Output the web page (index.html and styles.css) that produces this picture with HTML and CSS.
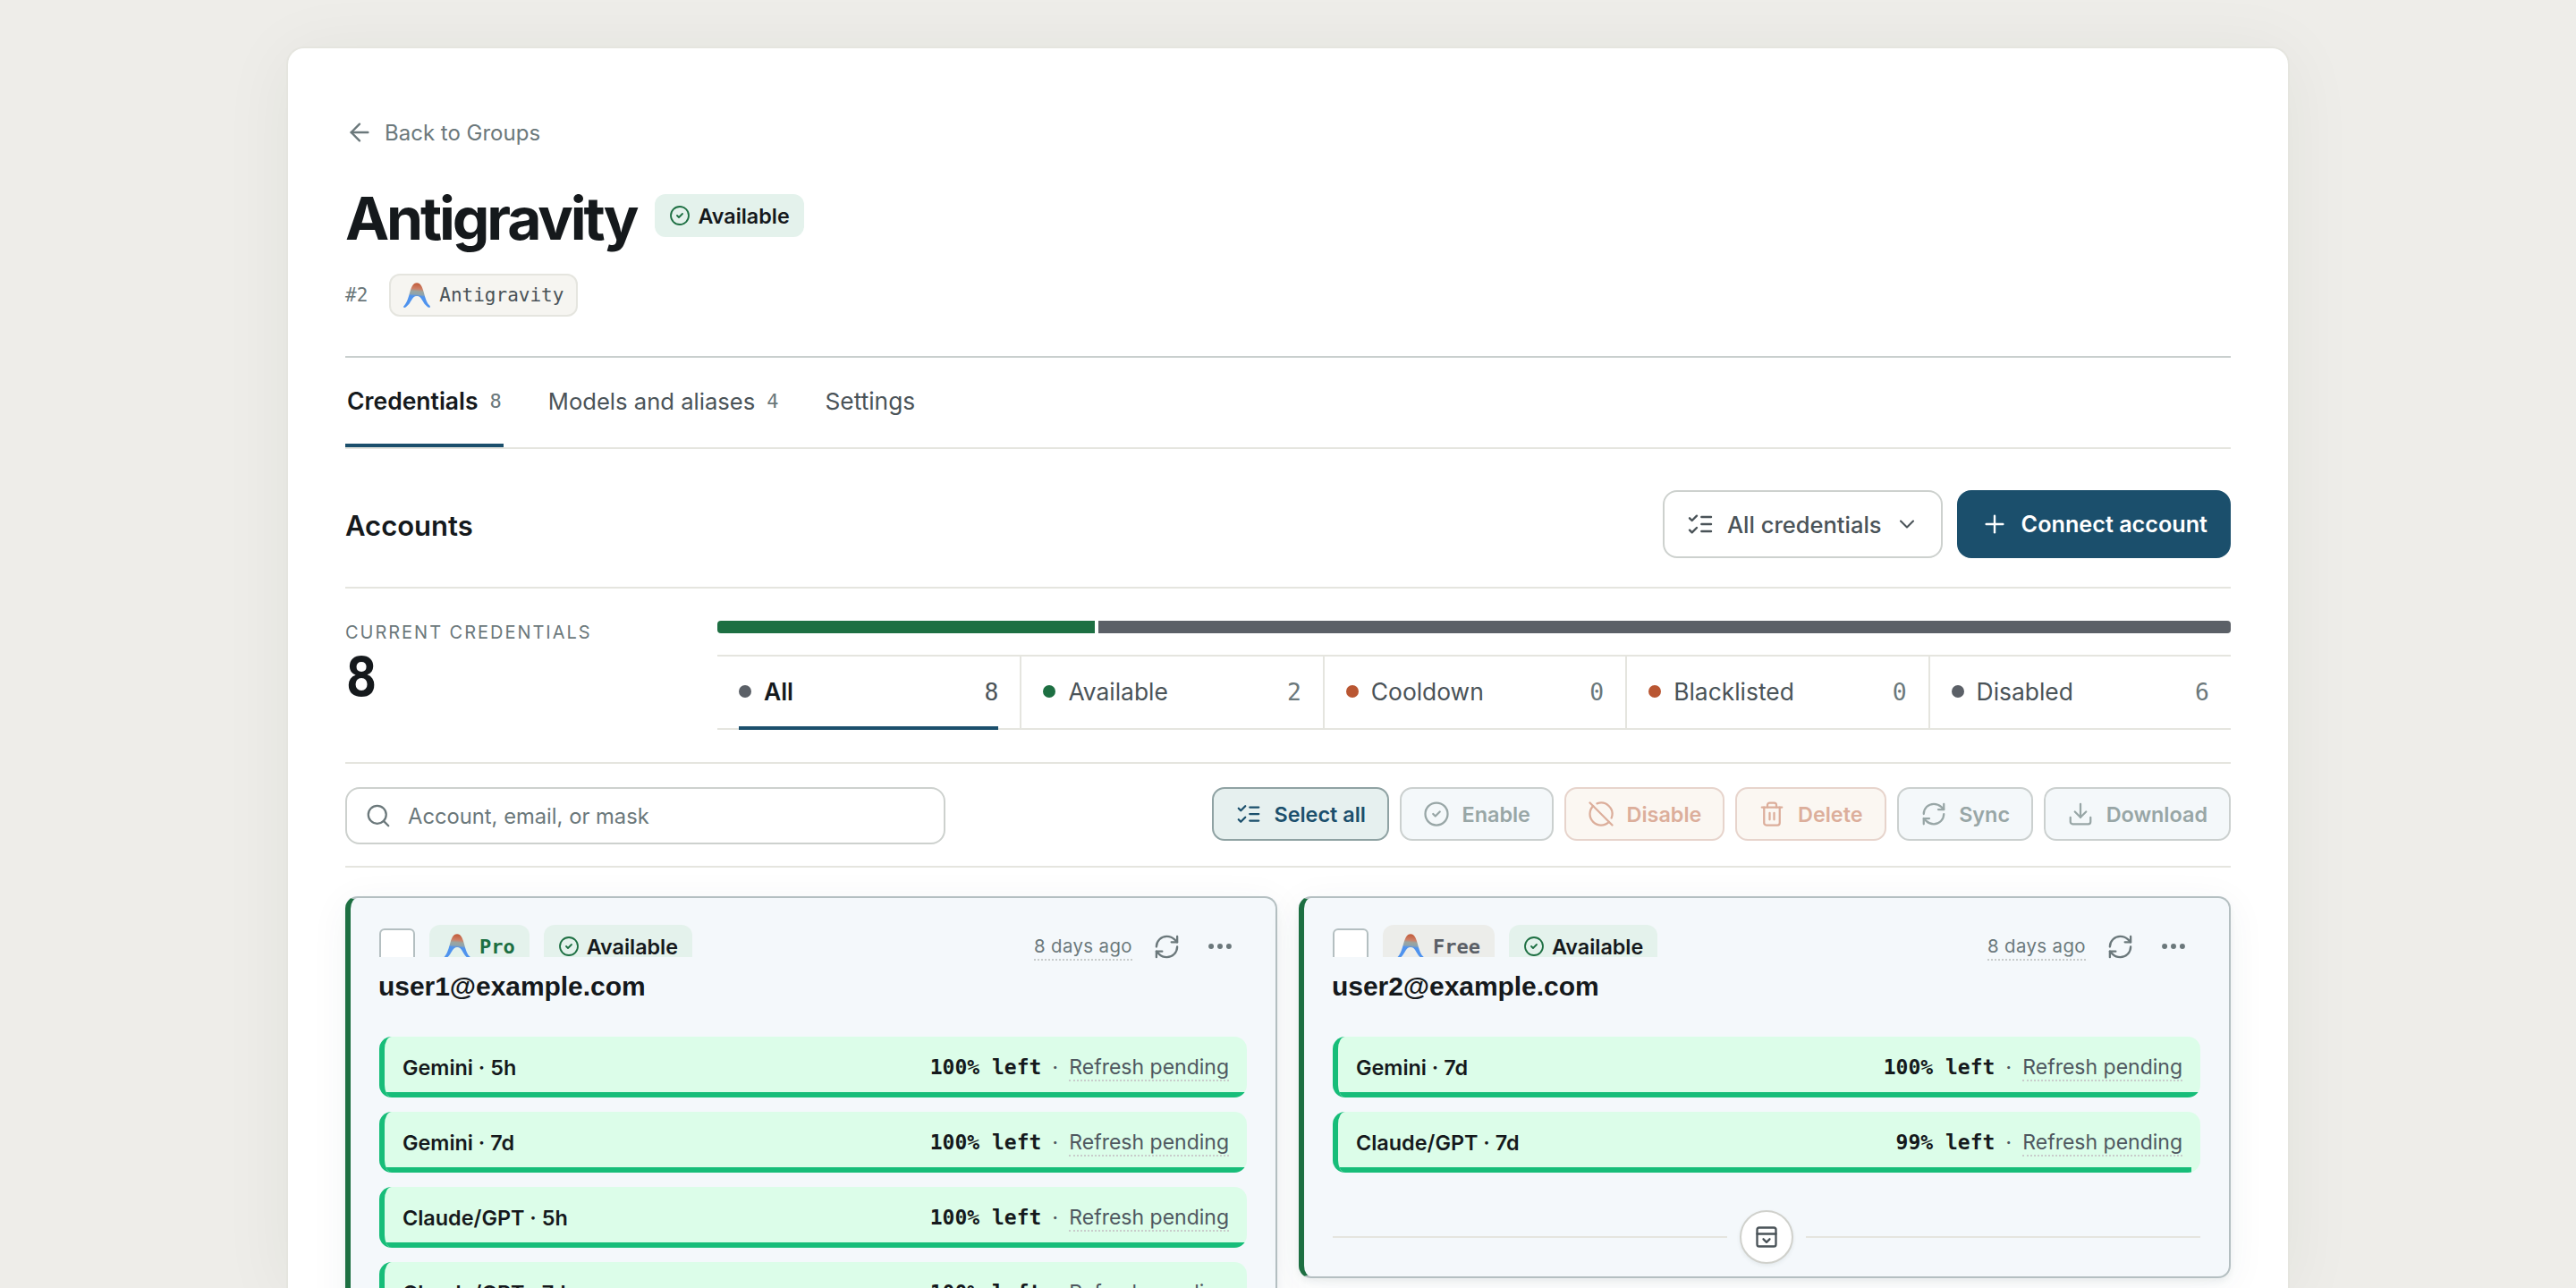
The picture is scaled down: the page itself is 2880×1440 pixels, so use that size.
FILE: index.html
```html
<!DOCTYPE html>
<html lang="en">

<head>
    <meta charset="UTF-8">
    <meta name="viewport" content="width=device-width, initial-scale=1.0">
    <title>Antigravity</title>
    <link rel="stylesheet" href="styles.css">
</head>

<body>
    <!-- Shared icons -->
    <svg class="sprite" width="0" height="0">
        <defs>
            <linearGradient id="arch" x1="0.1" y1="0" x2="0" y2="1">
                <stop offset="0" stop-color="#c4603f" />
                <stop offset="0.2" stop-color="#cd8068" />
                <stop offset="0.3" stop-color="#9aa5a0" />
                <stop offset="0.42" stop-color="#8fa3ac" />
                <stop offset="0.5" stop-color="#4f93ee" />
                <stop offset="1" stop-color="#4f93ee" />
            </linearGradient>
            <symbol id="logo" viewBox="0 0 24 24">
                <path fill="url(#arch)" stroke="none" d="M21.751 22.607c1.34 1.005 3.35.335 1.508-1.508C17.73 15.74 18.904 1 12.037 1 5.17 1 6.342 15.74.815 21.1c-2.01 2.009.167 2.511 1.507 1.506 5.192-3.517 4.857-9.714 9.715-9.714 4.857 0 4.522 6.197 9.714 9.715z" />
            </symbol>
            <symbol id="arrow-left" viewBox="0 0 24 24"><path d="m12 19-7-7 7-7" /><path d="M19 12H5" /></symbol>
            <symbol id="check-circle" viewBox="0 0 24 24"><circle cx="12" cy="12" r="10" /><path d="m9 12 2 2 4-4" /></symbol>
            <symbol id="list-checks" viewBox="0 0 24 24"><path d="m3 17 2 2 4-4" /><path d="m3 7 2 2 4-4" /><path d="M13 6h8" /><path d="M13 12h8" /><path d="M13 18h8" /></symbol>
            <symbol id="chevron-down" viewBox="0 0 24 24"><path d="m6 9 6 6 6-6" /></symbol>
            <symbol id="plus" viewBox="0 0 24 24"><path d="M5 12h14" /><path d="M12 5v14" /></symbol>
            <symbol id="search" viewBox="0 0 24 24"><circle cx="11" cy="11" r="8" /><path d="m21 21-4.3-4.3" /></symbol>
            <symbol id="circle-off" viewBox="0 0 24 24"><path d="m2 2 20 20" /><path d="M8.35 2.69A10 10 0 0 1 21.3 15.65" /><path d="M19.08 19.08A10 10 0 1 1 4.92 4.92" /></symbol>
            <symbol id="trash" viewBox="0 0 24 24"><path d="M3 6h18" /><path d="M19 6v14a2 2 0 0 1-2 2H7a2 2 0 0 1-2-2V6" /><path d="M8 6V4a2 2 0 0 1 2-2h4a2 2 0 0 1 2 2v2" /><path d="M10 11v6" /><path d="M14 11v6" /></symbol>
            <symbol id="refresh" viewBox="0 0 24 24"><path d="M3 12a9 9 0 0 1 9-9 9.75 9.75 0 0 1 6.74 2.74L21 8" /><path d="M21 3v5h-5" /><path d="M21 12a9 9 0 0 1-9 9 9.75 9.75 0 0 1-6.74-2.74L3 16" /><path d="M8 16H3v5" /></symbol>
            <symbol id="download" viewBox="0 0 24 24"><path d="M21 15v4a2 2 0 0 1-2 2H5a2 2 0 0 1-2-2v-4" /><path d="m7 10 5 5 5-5" /><path d="M12 15V3" /></symbol>
            <symbol id="more" viewBox="0 0 24 24"><g fill="currentColor"><circle cx="5" cy="12" r="1.2" /><circle cx="12" cy="12" r="1.2" /><circle cx="19" cy="12" r="1.2" /></g></symbol>
            <symbol id="panel-open" viewBox="0 0 24 24"><rect x="3" y="3" width="18" height="18" rx="2" /><path d="M3 9h18" /><path d="m9 14 3 3 3-3" /></symbol>
        </defs>
    </svg>

    <main class="panel">
        <a class="back"><svg class="icon"><use href="#arrow-left" /></svg>Back to Groups</a>

        <div class="title-row">
            <h1>Antigravity</h1>
            <span class="badge badge-ok"><svg class="icon"><use href="#check-circle" /></svg>Available</span>
        </div>
        <div class="meta-row">
            <span class="hash">#2</span>
            <span class="provider"><svg class="logo"><use href="#logo" /></svg>Antigravity</span>
        </div>

        <nav class="tabs">
            <a class="tab active">Credentials<span class="tab-count">8</span></a>
            <a class="tab">Models and aliases<span class="tab-count">4</span></a>
            <a class="tab tab-plain">Settings</a>
        </nav>

        <section class="accounts-head">
            <h2>Accounts</h2>
            <button class="btn-lg"><svg class="icon"><use href="#list-checks" /></svg>All credentials<svg class="icon chevron"><use href="#chevron-down" /></svg></button>
            <button class="btn-lg btn-primary"><svg class="icon"><use href="#plus" /></svg>Connect account</button>
        </section>

        <section class="summary">
            <div class="total">
                <div class="total-label">CURRENT CREDENTIALS</div>
                <div class="total-value">8</div>
            </div>
            <div class="breakdown">
                <div class="bar">
                    <span class="bar-ok"></span>
                    <span class="bar-off"></span>
                </div>
                <div class="filters">
                    <div class="filter active"><i class="dot"></i>All<span class="num">8</span></div>
                    <div class="filter"><i class="dot green"></i>Available<span class="num">2</span></div>
                    <div class="filter"><i class="dot red"></i>Cooldown<span class="num">0</span></div>
                    <div class="filter"><i class="dot red"></i>Blacklisted<span class="num">0</span></div>
                    <div class="filter"><i class="dot"></i>Disabled<span class="num">6</span></div>
                </div>
            </div>
        </section>

        <section class="toolbar">
            <div class="search"><svg class="icon"><use href="#search" /></svg>Account, email, or mask</div>
            <div class="actions">
                <button class="btn btn-select"><svg class="icon"><use href="#list-checks" /></svg>Select all</button>
                <button class="btn"><svg class="icon"><use href="#check-circle" /></svg>Enable</button>
                <button class="btn btn-danger"><svg class="icon"><use href="#circle-off" /></svg>Disable</button>
                <button class="btn btn-danger"><svg class="icon"><use href="#trash" /></svg>Delete</button>
                <button class="btn"><svg class="icon"><use href="#refresh" /></svg>Sync</button>
                <button class="btn"><svg class="icon"><use href="#download" /></svg>Download</button>
            </div>
        </section>

        <section class="cards">
            <article class="card">
                <header class="card-head">
                    <div class="card-badges">
                        <span class="checkbox"></span>
                        <span class="badge badge-ok plan plan-pro"><svg class="logo"><use href="#logo" /></svg>Pro</span>
                        <span class="badge badge-ok"><svg class="icon"><use href="#check-circle" /></svg>Available</span>
                    </div>
                    <div class="card-tools">
                        <span class="ago">8 days ago</span>
                        <span class="tool"><svg class="icon"><use href="#refresh" /></svg></span>
                        <span class="tool tool-more"><svg class="icon"><use href="#more" /></svg></span>
                    </div>
                </header>
                <h3>user1@example.com</h3>
                <div class="quotas">
                    <div class="quota"><span class="quota-name">Gemini · 5h</span><b>100% left</b><span>·</span><span class="pending">Refresh pending</span><i class="fill" style="width: 100%"></i></div>
                    <div class="quota"><span class="quota-name">Gemini · 7d</span><b>100% left</b><span>·</span><span class="pending">Refresh pending</span><i class="fill" style="width: 100%"></i></div>
                    <div class="quota"><span class="quota-name">Claude/GPT · 5h</span><b>100% left</b><span>·</span><span class="pending">Refresh pending</span><i class="fill" style="width: 100%"></i></div>
                    <div class="quota"><span class="quota-name">Claude/GPT · 7d</span><b>100% left</b><span>·</span><span class="pending">Refresh pending</span><i class="fill" style="width: 100%"></i></div>
                </div>
                <div class="expand"><span class="expand-btn"><svg class="icon"><use href="#panel-open" /></svg></span></div>
            </article>

            <article class="card">
                <header class="card-head">
                    <div class="card-badges">
                        <span class="checkbox"></span>
                        <span class="badge plan plan-free"><svg class="logo"><use href="#logo" /></svg>Free</span>
                        <span class="badge badge-ok"><svg class="icon"><use href="#check-circle" /></svg>Available</span>
                    </div>
                    <div class="card-tools">
                        <span class="ago">8 days ago</span>
                        <span class="tool"><svg class="icon"><use href="#refresh" /></svg></span>
                        <span class="tool tool-more"><svg class="icon"><use href="#more" /></svg></span>
                    </div>
                </header>
                <h3>user2@example.com</h3>
                <div class="quotas">
                    <div class="quota"><span class="quota-name">Gemini · 7d</span><b>100% left</b><span>·</span><span class="pending">Refresh pending</span><i class="fill" style="width: 100%"></i></div>
                    <div class="quota"><span class="quota-name">Claude/GPT · 7d</span><b>99% left</b><span>·</span><span class="pending">Refresh pending</span><i class="fill" style="width: 99%"></i></div>
                </div>
                <div class="expand"><span class="expand-btn"><svg class="icon"><use href="#panel-open" /></svg></span></div>
            </article>
        </section>
    </main>
</body>

</html>
```
FILE: styles.css
```css
:root {
    --ink: #15191c;
    --text: #4a5358;
    --muted: #6b787b;
    --line: #e5e5df;
    --line-strong: #cdd1ce;
    --blue: #1b4f6c;
    --green: #1d6f42;
    --slate: #5b6067;
    --rust: #b95632;
    --mono: "DejaVu Sans Mono", monospace;
}

* {
    box-sizing: border-box;
}

body {
    margin: 0;
    height: 100vh;
    overflow: hidden;
    background: #eeede9;
    color: var(--ink);
    font-family: Inter, "Liberation Sans", sans-serif;
    font-size: 24px;
}

h1,
h2,
h3 {
    margin: 0;
}

button {
    font-family: inherit;
    margin: 0;
}

.sprite {
    position: absolute;
}

.icon {
    width: 32px;
    height: 32px;
    flex: none;
    fill: none;
    stroke: currentColor;
    stroke-width: 1.8;
    stroke-linecap: round;
    stroke-linejoin: round;
}

.logo {
    width: 30px;
    height: 30px;
    flex: none;
}

.panel {
    width: 2240px;
    height: calc(100vh - 52px);
    margin: 52px auto 0;
    padding: 76px 64px 0;
    background: #fff;
    border: 2px solid var(--line);
    border-bottom: 0;
    border-radius: 20px 20px 0 0;
    box-shadow: 0 8px 80px rgba(40, 45, 40, 0.06);
}

/* Header */
.back {
    display: flex;
    align-items: center;
    gap: 12px;
    height: 36px;
    color: var(--muted);
}

.title-row {
    display: flex;
    align-items: flex-start;
    gap: 21px;
    height: 72px;
    margin-top: 42px;
}

h1 {
    font-size: 66px;
    line-height: 72px;
    font-weight: 680;
    letter-spacing: -3.15px;
}

.badge {
    display: flex;
    align-items: center;
    gap: 8px;
    flex: none;
    height: 48px;
    padding: 0 16px;
    border-radius: 12px;
    font-size: 23.3px;
    font-weight: 600;
}

.badge .icon {
    width: 24px;
    height: 24px;
    color: var(--green);
}

.badge-ok {
    background: #e4f2ec;
}

.title-row .badge {
    margin-top: 9px;
}

.meta-row {
    display: flex;
    align-items: center;
    gap: 24px;
    height: 48px;
    margin-top: 26px;
    font-family: var(--mono);
    font-size: 21px;
    color: var(--muted);
}

.provider {
    display: flex;
    align-items: center;
    gap: 10px;
    height: 48px;
    padding: 0 14px;
    background: #f6f5f1;
    border: 2px solid var(--line);
    border-radius: 12px;
    color: var(--text);
}

/* Tabs */
.tabs {
    display: flex;
    gap: 48px;
    margin-top: 44px;
    border-top: 2px solid #c9cfce;
    border-bottom: 2px solid var(--line);
}

.tab {
    display: flex;
    align-items: center;
    gap: 13px;
    height: 100px;
    padding: 0 2px;
    border-bottom: 4px solid transparent;
    font-size: 25.6px;
    color: var(--text);
}

.tab.active {
    border-color: var(--blue);
    color: var(--ink);
    font-size: 26.5px;
    font-weight: 600;
}

.tab-plain {
    font-size: 26.3px;
}

.tab-count {
    font-family: var(--mono);
    font-size: 22px;
    font-weight: 400;
    color: var(--muted);
}

/* Accounts */
.accounts-head {
    display: flex;
    align-items: center;
    gap: 16px;
    padding: 46px 0 32px;
    border-bottom: 2px solid var(--line);
}

h2 {
    flex: 1;
    padding-top: 2px;
    font-size: 31px;
    font-weight: 600;
}

.btn-lg {
    display: flex;
    align-items: center;
    gap: 14px;
    height: 76px;
    padding: 0 24px;
    background: #fff;
    border: 2px solid var(--line-strong);
    border-radius: 16px;
    color: var(--text);
    font-size: 25.5px;
    font-weight: 500;
}

.btn-lg .chevron {
    width: 28px;
    height: 28px;
}

.btn-primary {
    background: var(--blue);
    border-color: var(--blue);
    color: #fff;
    font-size: 25.2px;
    font-weight: 600;
}

/* Summary */
.summary {
    display: grid;
    grid-template-columns: 416px 1fr;
    padding: 36px 0;
    border-bottom: 2px solid var(--line);
}

.total-label {
    font-size: 20px;
    line-height: 26px;
    letter-spacing: 1.97px;
    color: var(--muted);
}

.total-value {
    margin-top: 7px;
    font-family: var(--mono);
    font-size: 60px;
    line-height: 60px;
    font-weight: 700;
}

.bar {
    display: flex;
    gap: 4px;
    height: 14px;
    border-radius: 4px;
    overflow: hidden;
}

.bar-ok {
    flex: 2;
    background: var(--green);
}

.bar-off {
    flex: 6;
    background: var(--slate);
}

.filters {
    display: grid;
    grid-template-columns: repeat(5, 1fr);
    margin-top: 24px;
    border-top: 2px solid var(--line);
    border-bottom: 2px solid var(--line);
}

.filter {
    position: relative;
    display: flex;
    align-items: center;
    gap: 14px;
    height: 78px;
    margin-bottom: 2px;
    padding: 0 24px;
    font-size: 26.4px;
    color: var(--text);
}

.filter + .filter {
    height: 80px;
    margin-bottom: 0;
    padding-bottom: 2px;
    border-left: 2px solid var(--line);
}

.filter.active {
    color: var(--ink);
    font-weight: 600;
}

.filter.active::after {
    content: "";
    position: absolute;
    left: 24px;
    right: 24px;
    bottom: -4px;
    height: 4px;
    background: var(--blue);
}

.dot {
    width: 14px;
    height: 14px;
    border-radius: 50%;
    background: var(--slate);
}

.dot.green {
    background: var(--green);
}

.dot.red {
    background: var(--rust);
}

.num {
    margin-left: auto;
    font-family: var(--mono);
    font-weight: 400;
    color: var(--muted);
}

.active .num {
    color: var(--text);
}

/* Toolbar */
.toolbar {
    display: flex;
    align-items: flex-start;
    justify-content: space-between;
    padding: 26px 0 24px;
    border-bottom: 2px solid var(--line);
}

.search {
    display: flex;
    align-items: center;
    gap: 18px;
    width: 671px;
    height: 64px;
    padding: 0 20px;
    border: 2px solid var(--line-strong);
    border-radius: 16px;
    font-size: 23.75px;
    color: var(--muted);
}

.search .icon,
.btn .icon {
    width: 30px;
    height: 30px;
}

.actions {
    display: flex;
    gap: 12px;
}

.btn {
    display: flex;
    align-items: center;
    gap: 13.6px;
    height: 60px;
    padding: 0 24px;
    background: #f4f8fa;
    border: 2px solid #cbd0cf;
    border-radius: 14px;
    color: #98a6a6;
    font-size: 23.4px;
    font-weight: 600;
}

.btn-select {
    background: #e6f0ef;
    border-color: #8fa2a3;
    color: var(--blue);
}

.btn-danger {
    background: #fbf7f2;
    border-color: #e7d4cc;
    color: #dcae9b;
}

/* Cards */
.cards {
    display: grid;
    grid-template-columns: 1fr 1fr;
    align-items: start;
    gap: 24px;
    padding-top: 32px;
}

.card {
    padding: 30px 32px 14px;
    background: #f4f8fb;
    border: 2px solid #b4bfc1;
    border-left: 6px solid var(--green);
    border-radius: 14px;
    box-shadow: 0 4px 6px rgba(40, 70, 70, 0.06), 0 8px 44px rgba(40, 70, 80, 0.06);
}

.card-head {
    display: flex;
    justify-content: space-between;
    align-items: flex-start;
    height: 36px;
}

.card-badges {
    display: flex;
    align-items: flex-start;
    gap: 16px;
    height: 36px;
    overflow: hidden;
}

.checkbox {
    flex: none;
    width: 40px;
    height: 40px;
    margin-top: 4px;
    background: #fff;
    border: 2px solid #b4bfc1;
    border-radius: 6px;
}

.plan {
    gap: 10px;
    font-family: var(--mono);
    font-size: 22px;
    font-weight: 700;
}

.plan-pro {
    color: var(--green);
}

.plan-free {
    background: #ecedea;
    color: var(--slate);
}

.card-tools {
    display: flex;
    align-items: center;
    height: 48px;
    color: var(--muted);
}

.ago {
    margin: 2px 8px 0 0;
    border-bottom: 2px dotted #c8cccb;
    font-size: 20.4px;
    line-height: 28px;
    letter-spacing: 0.4px;
}

.tool {
    display: flex;
    align-items: center;
    justify-content: center;
    width: 60px;
    height: 48px;
}

.tool .icon {
    width: 31px;
    height: 31px;
}

.tool-more .icon {
    width: 34px;
    height: 34px;
}

h3 {
    margin: 15px 0 0 -1px;
    font-family: "Liberation Sans", Arial, sans-serif;
    font-size: 30px;
    line-height: 36px;
    letter-spacing: -0.05px;
}

.quotas {
    display: grid;
    gap: 16px;
    margin-top: 38px;
}

.quota {
    position: relative;
    display: flex;
    align-items: center;
    gap: 12px;
    height: 68px;
    padding: 0 20px;
    background: #dcfde9;
    border-left: 6px solid #17bd79;
    border-radius: 14px;
    overflow: hidden;
    color: #4f5860;
}

.quota-name {
    flex: 1;
    font-size: 23.4px;
    font-weight: 600;
    color: var(--ink);
}

.quota b {
    font-family: var(--mono);
    font-size: 23px;
    color: var(--ink);
}

.pending {
    margin-top: 2px;
    border-bottom: 2px dotted #c8cccb;
    font-size: 23px;
    line-height: 28px;
}

.fill {
    position: absolute;
    left: 0;
    bottom: 0;
    height: 6px;
    background: #17bd79;
}

.expand {
    display: flex;
    align-items: center;
    gap: 14px;
    margin-top: 42px;
}

.expand::before,
.expand::after {
    content: "";
    flex: 1;
    height: 2px;
    background: var(--line);
}

.expand-btn {
    display: flex;
    align-items: center;
    justify-content: center;
    width: 60px;
    height: 60px;
    background: #fff;
    border: 2px solid #d0d1cc;
    border-radius: 50%;
    box-shadow: 0 2px 4px rgba(40, 60, 60, 0.08);
    color: var(--text);
}

.expand-btn .icon {
    width: 28px;
    height: 28px;
    stroke-width: 2;
}
```
